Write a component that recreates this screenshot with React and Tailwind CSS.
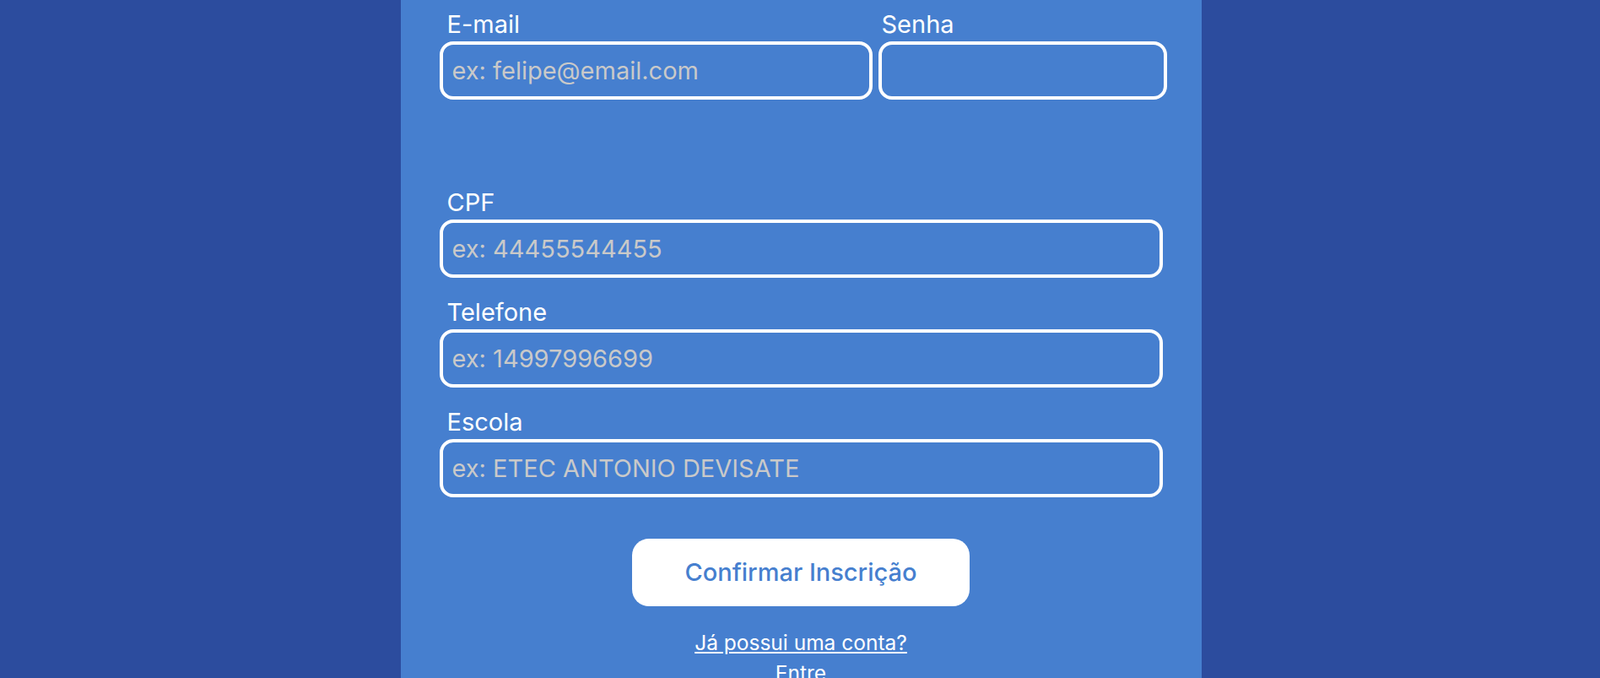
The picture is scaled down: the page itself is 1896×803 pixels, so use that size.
import React from 'react';

const Field = ({ label, placeholder, type = 'text', width, labelPad = 'pl-[9px]' }) => (
  <div className={width}>
    <label className={`block text-[29px] leading-[35px] text-white ${labelPad}`}>{label}</label>
    <input
      type={type}
      placeholder={placeholder}
      className="mt-[3px] block w-full h-[69px] border-4 border-white rounded-[16px] bg-transparent px-[11px] text-[29px] text-white placeholder:text-[#c9c9c9] outline-none"
    />
  </div>
);

const App = () => {
  return (
    <div className="min-h-screen bg-[#2c4c9e] flex justify-center pl-[2px] font-['Inter',sans-serif]">
      <div className="w-[949px] min-h-[803px] bg-[#467fcf] px-[46px] pt-[11px]">
        <div className="flex gap-[7px] w-[862px]">
          <Field label="E-mail" placeholder="ex: felipe@email.com" width="w-[513px]" />
          <Field label="Senha" type="password" width="w-[342px]" labelPad="pl-[4px]" />
        </div>

        <div className="mt-[104px] flex flex-col gap-[23px]">
          <Field label="CPF" placeholder="ex: 44455544455" width="w-full" />
          <Field label="Telefone" placeholder="ex: 14997996699" width="w-full" />
          <Field label="Escola" placeholder="ex: ETEC ANTONIO DEVISATE" width="w-full" />
        </div>

        <div className="mt-[49px] flex justify-center">
          <button className="w-[400px] h-[80px] rounded-[20px] bg-white text-[#467fcf] text-[29px] font-medium">
            Confirmar Inscrição
          </button>
        </div>

        <div className="mt-[25px] text-center text-white text-[24.5px] leading-[36px]">
          <a href="#" className="underline">Já possui uma conta?</a>
          <p>Entre</p>
        </div>
      </div>
    </div>
  );
};

export default App;
